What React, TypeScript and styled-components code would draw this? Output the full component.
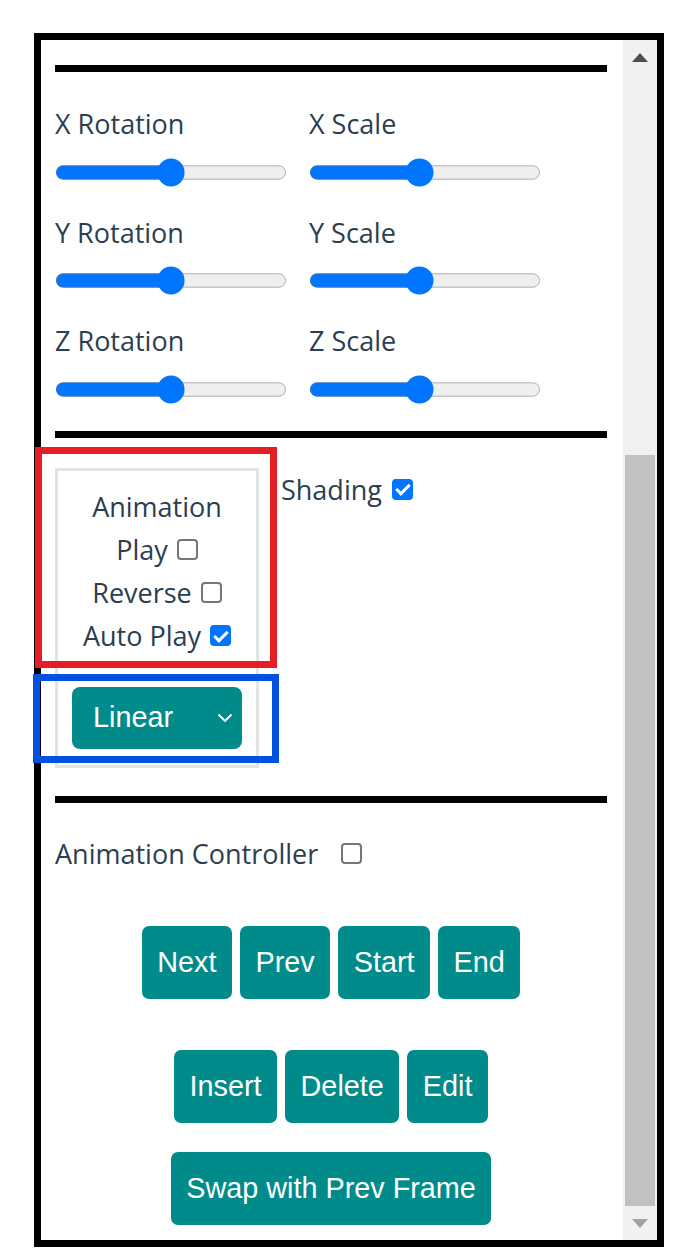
import React from 'react';
import styled, { createGlobalStyle } from 'styled-components';

const GlobalStyle = createGlobalStyle`
	html, body {
		margin: 0;
		padding: 0;
		background: #ffffff;
	}
`;

// Page + frame
const Page = styled.div`
	position: relative;
	padding: 33px 13px 11px 34px;
`;

const Frame = styled.div`
	display: flex;
	height: 1200px;
	border: 7px solid #000000;
`;

const Content = styled.div`
	flex: 1;
	min-width: 0;
	overflow: hidden;
	padding: 25px 16px 0 14px;
	color: #2c3e50;
	font-family: 'Open Sans', 'Noto Sans', sans-serif;
	font-size: 27px;
	line-height: 43.2px;
`;

const Rule = styled.div`
	height: 7px;
	background: #000000;
`;

// Scrollbar
const Scrollbar = styled.div`
	width: 34px;
	flex-shrink: 0;
	display: flex;
	flex-direction: column;
	background: #f1f1f1;
`;

const ScrollButton = styled.div`
	height: 34px;
	display: flex;
	align-items: center;
	justify-content: center;
`;

const Arrow = styled.div<{ $dir: 'up' | 'down' }>`
	width: 0;
	height: 0;
	border-left: 8px solid transparent;
	border-right: 8px solid transparent;
	${({ $dir }) =>
		$dir === 'up'
			? 'border-bottom: 9px solid #505050;'
			: 'border-top: 9px solid #a3a3a3;'}
`;

const ScrollTrack = styled.div`
	flex: 1;
	display: flex;
	flex-direction: column;
	justify-content: flex-end;
	padding: 0 2px;
`;

const ScrollThumb = styled.div`
	height: 751px;
	background: #c1c1c1;
`;

// Transform section
const SliderGrid = styled.div`
	display: grid;
	grid-template-columns: 254px 254px;
	row-gap: 24px;
	padding: 30px 0 27px;
`;

const SliderCell = styled.div`
	display: flex;
	flex-direction: column;
	align-items: flex-start;
`;

const Label = styled.span`
	display: block;
`;

const Range = styled.input`
	zoom: 1.8;
	margin: 7px 0 0;
	display: block;
`;

// Animation section
const AnimSection = styled.div`
	display: flex;
	align-items: flex-start;
	padding: 30px 0 28px;
`;

const AnimBox = styled.div`
	box-sizing: border-box;
	width: 204px;
	border: 3px solid #e2e3e7;
	padding: 14px 14px 16px;
	display: flex;
	flex-direction: column;
	align-items: stretch;
	text-align: center;
`;

const CheckRow = styled.label<{ $center?: boolean; $gap?: number }>`
	display: flex;
	align-items: center;
	justify-content: ${({ $center }) => ($center ? 'center' : 'flex-start')};
	gap: ${({ $gap }) => $gap ?? 9}px;
	white-space: nowrap;
`;

const Checkbox = styled.input`
	appearance: none;
	position: relative;
	flex-shrink: 0;
	box-sizing: border-box;
	width: 21px;
	height: 21px;
	margin: 0;
	border: 2px solid #767676;
	border-radius: 4px;
	background: #ffffff;

	&:checked {
		background: #0075ff;
		border-color: #0075ff;
	}

	&:checked::after {
		content: '';
		position: absolute;
		left: 5px;
		top: 0.5px;
		width: 5px;
		height: 11px;
		border: solid #ffffff;
		border-width: 0 3px 3px 0;
		transform: rotate(45deg);
	}
`;

const SelectButton = styled.button`
	margin-top: 29px;
	height: 62px;
	display: flex;
	align-items: center;
	justify-content: space-between;
	padding: 0 9px 0 21px;
	border: none;
	border-radius: 8px;
	background: #008b8b;
	color: #ffffff;
	font-family: 'Liberation Sans', Arial, sans-serif;
	font-size: 28.8px;
`;

const ShadingRow = styled(CheckRow)`
	margin-left: 22px;
`;

// Controller section
const ControllerSection = styled.div`
	padding-top: 29px;
`;

const ButtonRow = styled.div<{ $top: number }>`
	display: flex;
	justify-content: center;
	gap: 8px;
	margin-top: ${({ $top }) => $top}px;
`;

const TealButton = styled.button`
	padding: 20px 15.5px;
	border: none;
	border-radius: 7px;
	background: #008b8b;
	color: #ffffff;
	font-family: 'Liberation Sans', Arial, sans-serif;
	font-size: 28.8px;
	line-height: 33px;
	cursor: pointer;
`;

// Annotation overlays
const Marker = styled.div<{ $color: string }>`
	position: absolute;
	box-sizing: border-box;
	border: 7px solid ${({ $color }) => $color};
	pointer-events: none;
`;

const sliders = [
	{ label: 'X Rotation', min: -180, max: 180, step: 1, value: 0 },
	{ label: 'X Scale', min: 0.1, max: 2, step: 0.1, value: 1 },
	{ label: 'Y Rotation', min: -180, max: 180, step: 1, value: 0 },
	{ label: 'Y Scale', min: 0.1, max: 2, step: 0.1, value: 1 },
	{ label: 'Z Rotation', min: -180, max: 180, step: 1, value: 0 },
	{ label: 'Z Scale', min: 0.1, max: 2, step: 0.1, value: 1 },
];

export default function App() {
	return (
		<Page>
			<GlobalStyle />
			<Frame>
				<Content>
					<Rule />
					<SliderGrid>
						{sliders.map((s) => (
							<SliderCell key={s.label}>
								<Label>{s.label}</Label>
								<Range
									type='range'
									min={s.min}
									max={s.max}
									step={s.step}
									defaultValue={s.value}
								/>
							</SliderCell>
						))}
					</SliderGrid>
					<Rule />

					<AnimSection>
						<AnimBox>
							<Label>Animation</Label>
							<CheckRow $center>
								Play <Checkbox type='checkbox' />
							</CheckRow>
							<CheckRow $center>
								Reverse <Checkbox type='checkbox' />
							</CheckRow>
							<CheckRow $center>
								Auto Play <Checkbox type='checkbox' defaultChecked />
							</CheckRow>
							<SelectButton>
								<span>Linear</span>
								<svg width='16' height='10' viewBox='0 0 16 10'>
									<polyline
										points='1.5,1.5 8,8 14.5,1.5'
										fill='none'
										stroke='#ffffff'
										strokeWidth='1.8'
									/>
								</svg>
							</SelectButton>
						</AnimBox>
						<ShadingRow $gap={10}>
							Shading <Checkbox type='checkbox' defaultChecked />
						</ShadingRow>
					</AnimSection>
					<Rule />

					<ControllerSection>
						<CheckRow $gap={23}>
							Animation Controller <Checkbox type='checkbox' />
						</CheckRow>
						<ButtonRow $top={51}>
							<TealButton>Next</TealButton>
							<TealButton>Prev</TealButton>
							<TealButton>Start</TealButton>
							<TealButton>End</TealButton>
						</ButtonRow>
						<ButtonRow $top={51}>
							<TealButton>Insert</TealButton>
							<TealButton>Delete</TealButton>
							<TealButton>Edit</TealButton>
						</ButtonRow>
						<ButtonRow $top={29}>
							<TealButton>Swap with Prev Frame</TealButton>
						</ButtonRow>
					</ControllerSection>
				</Content>

				<Scrollbar>
					<ScrollButton>
						<Arrow $dir='up' />
					</ScrollButton>
					<ScrollTrack>
						<ScrollThumb />
					</ScrollTrack>
					<ScrollButton>
						<Arrow $dir='down' />
					</ScrollButton>
				</Scrollbar>
			</Frame>

			<Marker $color='#e41e24' style={{ left: 35, top: 447, width: 242, height: 221 }} />
			<Marker $color='#0450e0' style={{ left: 33, top: 674, width: 246, height: 89 }} />
		</Page>
	);
}
